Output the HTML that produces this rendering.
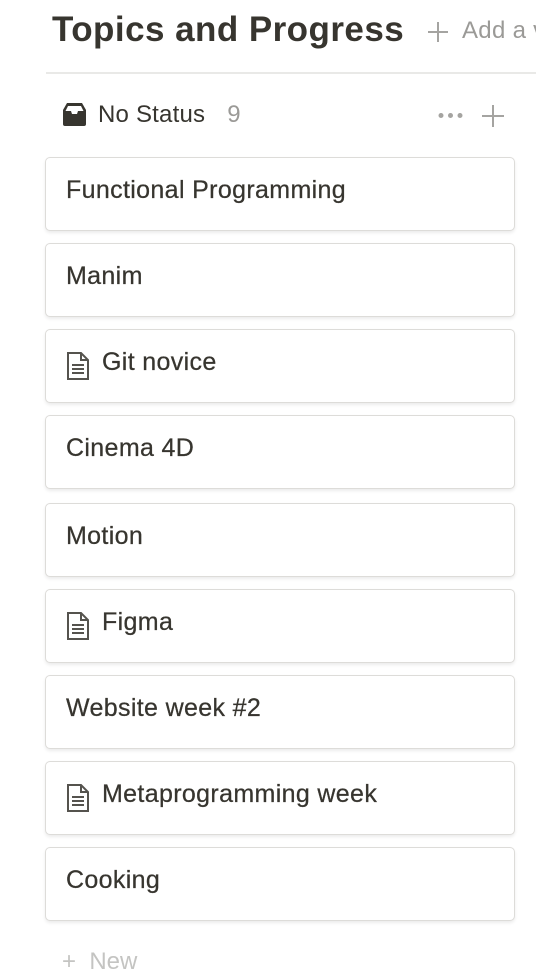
<!DOCTYPE html>
<html><head><style>
body{margin:0;width:536px;height:958px;overflow:hidden;background:#fff;font-family:"Liberation Sans",sans-serif;color:#37352f;position:relative}
.t{position:absolute;left:52px;top:10px;font-size:35px;font-weight:bold;white-space:nowrap;letter-spacing:0.45px}
.add{position:absolute;left:462px;top:17px;font-size:24px;color:#9b9a97;white-space:nowrap;letter-spacing:0.3px}
.hr{position:absolute;left:46px;right:0;top:72px;height:2px;background:#e9e9e7}
.grp{position:absolute;left:62px;top:101px;font-size:24px;white-space:nowrap;letter-spacing:0.2px}
.card{position:absolute;left:45px;width:468px;height:72px;border:1px solid #dddcd9;border-radius:5px;box-shadow:0 2px 3px rgba(15,15,15,.08);background:#fff}
.card span{position:absolute;left:20px;top:18px;font-size:25px;white-space:nowrap;letter-spacing:0.35px;-webkit-text-stroke:0.25px #37352f}
.card svg{position:absolute;left:20px;top:22px}
.card span.i{left:56px}
</style></head><body>
<div class="t">Topics and Progress</div>
<svg style="position:absolute;left:427px;top:21px" width="22" height="22" viewBox="0 0 22 22"><path d="M11 1v20M1 11h20" stroke="#a5a4a1" stroke-width="2"/></svg>
<div class="add">Add a v</div>
<div class="hr"></div>
<div class="grp">
<svg width="25" height="25" viewBox="0 0 25 25" style="position:absolute;left:0;top:1px"><path d="M5 1h15l4 7v14a2 2 0 0 1-2 2H3a2 2 0 0 1-2-2V8z" fill="#37352f"/><path d="M6 4h13l2.5 5H16l-1 3h-5l-1-3H3.5z" fill="#fff"/></svg>
<span style="margin-left:36px">No Status</span><span style="margin-left:22px;color:#9b9a97">9</span></div>
<svg style="position:absolute;left:438px;top:112px" width="25" height="7" viewBox="0 0 25 7"><circle cx="3" cy="3.5" r="2.5" fill="#a5a4a1"/><circle cx="12.5" cy="3.5" r="2.5" fill="#a5a4a1"/><circle cx="22" cy="3.5" r="2.5" fill="#a5a4a1"/></svg>
<svg style="position:absolute;left:481px;top:104px" width="24" height="24" viewBox="0 0 24 24"><path d="M12 1v22M1 12h22" stroke="#a5a4a1" stroke-width="2"/></svg>
<div class="card" style="top:157px"><span>Functional Programming</span></div>
<div class="card" style="top:243px"><span>Manim</span></div>
<div class="card" style="top:329px"><svg width="24" height="28" viewBox="0 0 24 28"><path d="M2 1h13l7 7v19H2z M15 1v7h7" fill="none" stroke="#55534e" stroke-width="2"/><path d="M6 13h12M6 17h12M6 21h12" stroke="#55534e" stroke-width="2"/></svg><span class="i">Git novice</span></div>
<div class="card" style="top:415px"><span>Cinema 4D</span></div>
<div class="card" style="top:503px"><span>Motion</span></div>
<div class="card" style="top:589px"><svg width="24" height="28" viewBox="0 0 24 28"><path d="M2 1h13l7 7v19H2z M15 1v7h7" fill="none" stroke="#55534e" stroke-width="2"/><path d="M6 13h12M6 17h12M6 21h12" stroke="#55534e" stroke-width="2"/></svg><span class="i">Figma</span></div>
<div class="card" style="top:675px"><span>Website week #2</span></div>
<div class="card" style="top:761px"><svg width="24" height="28" viewBox="0 0 24 28"><path d="M2 1h13l7 7v19H2z M15 1v7h7" fill="none" stroke="#55534e" stroke-width="2"/><path d="M6 13h12M6 17h12M6 21h12" stroke="#55534e" stroke-width="2"/></svg><span class="i">Metaprogramming week</span></div>
<div class="card" style="top:847px"><span>Cooking</span></div>
<div style="position:absolute;left:62px;top:948px;font-size:24px;color:#c4c4c2;white-space:nowrap">+ &nbsp;New</div>
</body></html>
